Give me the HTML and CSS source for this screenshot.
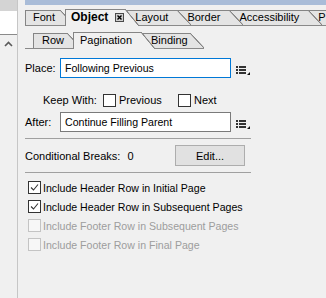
FILE: index.html
```html
<!DOCTYPE html>
<html lang="en">
<head>
    <meta charset="UTF-8">
    <title>Object - Pagination</title>
    <link rel="stylesheet" href="styles.css">
</head>
<body>
    <div class="app">
        <!-- bande de gauche -->
        <div class="side">
            <div class="side-top"></div>
            <div class="side-white"></div>
            <div class="side-scroll">
                <svg class="chevron" width="10" height="6" viewBox="0 0 10 6"><polyline points="1,5 4.5,1.5 8,5" fill="none" stroke="#5a5a5a" stroke-width="1.6"/></svg>
            </div>
        </div>

        <div class="panel">
            <div class="titlebar"></div>

            <div class="tabs tabs-main">
                <span class="tab first">Font</span>
                <span class="tab active">Object<svg class="close" width="9" height="9" viewBox="0 0 9 9"><rect x="0.5" y="0.5" width="8" height="8" fill="#cfcfcf" stroke="#4a4a4a"/><path d="M2.5 2.5 L6.5 6.5 M6.5 2.5 L2.5 6.5" stroke="#000" stroke-width="1.4"/></svg></span>
                <span class="tab">Layout</span>
                <span class="tab">Border</span>
                <span class="tab">Accessibility</span>
                <span class="tab">P</span>
            </div>

            <div class="tabs tabs-sub">
                <span class="tab first">Row</span>
                <span class="tab active">Pagination</span>
                <span class="tab last">Binding</span>
            </div>

            <div class="field-row place">
                <span class="label">Place:</span>
                <div class="input focus">Following Previous</div>
                <svg class="list-icon" width="16" height="20" viewBox="0 0 16 20">
                    <rect x="1" y="8" width="2" height="2" fill="#333"/><rect x="4" y="8" width="7" height="2" fill="#333"/>
                    <rect x="1" y="11" width="2" height="2" fill="#333"/><rect x="4" y="11" width="7" height="2" fill="#333"/>
                    <rect x="1" y="14" width="2" height="2" fill="#333"/><rect x="4" y="14" width="7" height="2" fill="#333"/>
                    <polygon points="12,17 15,17 15,14" fill="#111"/>
                </svg>
            </div>

            <div class="keep-row">
                <span class="keep-label">Keep With:</span>
                <span class="keep-item"><span class="cb"></span><span class="cb-text">Previous</span></span>
                <span class="keep-item"><span class="cb"></span><span class="cb-text">Next</span></span>
            </div>

            <div class="field-row after">
                <span class="label">After:</span>
                <div class="input">Continue Filling Parent</div>
                <svg class="list-icon" width="16" height="20" viewBox="0 0 16 20">
                    <rect x="1" y="8" width="2" height="2" fill="#333"/><rect x="4" y="8" width="7" height="2" fill="#333"/>
                    <rect x="1" y="11" width="2" height="2" fill="#333"/><rect x="4" y="11" width="7" height="2" fill="#333"/>
                    <rect x="1" y="14" width="2" height="2" fill="#333"/><rect x="4" y="14" width="7" height="2" fill="#333"/>
                    <polygon points="12,17 15,17 15,14" fill="#111"/>
                </svg>
            </div>

            <div class="sep"></div>

            <div class="cond-row">
                <span class="cond-label">Conditional Breaks:<span class="cond-value">0</span></span>
                <button class="btn">Edit...</button>
            </div>

            <div class="sep sep2"></div>

            <div class="checklist">
                <div class="check-row"><span class="cb checked"><svg width="11" height="11" viewBox="0 0 11 11"><polyline points="2,5.5 4.5,8 9,2.5" fill="none" stroke="#333" stroke-width="1.1"/></svg></span><span class="cb-text">Include Header Row in Initial Page</span></div>
                <div class="check-row"><span class="cb checked"><svg width="11" height="11" viewBox="0 0 11 11"><polyline points="2,5.5 4.5,8 9,2.5" fill="none" stroke="#333" stroke-width="1.1"/></svg></span><span class="cb-text">Include Header Row in Subsequent Pages</span></div>
                <div class="check-row disabled"><span class="cb"></span><span class="cb-text">Include Footer Row in Subsequent Pages</span></div>
                <div class="check-row disabled"><span class="cb"></span><span class="cb-text">Include Footer Row in Final Page</span></div>
            </div>
        </div>
    </div>
</body>
</html>
```

FILE: styles.css
```css
html, body {
    margin: 0;
    padding: 0;
    height: 100%;
    overflow: hidden;
}

body {
    font-family: "Liberation Sans", Arial, sans-serif;
    font-size: 11px;
    color: #000;
    background-color: #f0f0f0;
}

.app {
    display: flex;
    height: 100%;
}

/* bande de gauche */
.side {
    width: 17px;
    flex-shrink: 0;
    border-right: 1px solid #c6c6c6;
}

.side-top {
    height: 11px;
    background-color: #d4d4d4;
}

.side-white {
    height: 23px;
    background-color: #fff;
    border-bottom: 1px solid #8a8a8a;
}

.side-scroll {
    padding: 6px 0 0 4px;
}

.chevron {
    display: block;
}

/* panneau principal */
.panel {
    flex: 1;
    padding-left: 7px;
    overflow: hidden;
}

.titlebar {
    height: 5px;
    background-color: #a9bcd8;
}

/* onglets */
.tabs {
    display: flex;
    height: 16px;
    border-bottom: 1px solid #898989;
}

.tabs-main {
    margin-top: 4px;
}

.tabs-sub {
    margin-top: 6px;
    padding-left: 8px;
    width: max-content;
}

.tab {
    position: relative;
    flex-shrink: 0;
    height: 15px;
    margin-top: 1px;
    margin-left: -14px;
    padding: 0 23px 0 10px;
    line-height: 15px;
    white-space: nowrap;
    background:
        linear-gradient(to top right, #e4e4e4 calc(50% - 0.8px), #858585 calc(50% - 0.3px), #858585 calc(50% + 0.3px), transparent calc(50% + 0.8px)) right top / 14px 100% no-repeat,
        linear-gradient(#858585, #858585) left top / calc(100% - 14px) 1px no-repeat,
        linear-gradient(#e4e4e4, #e4e4e4) left top / calc(100% - 14px) 100% no-repeat;
}

.tab:nth-child(1) { z-index: 6; }
.tab:nth-child(2) { z-index: 5; }
.tab:nth-child(3) { z-index: 4; }
.tab:nth-child(4) { z-index: 3; }
.tab:nth-child(5) { z-index: 2; }
.tab:nth-child(6) { z-index: 1; }

.tab.first {
    margin-left: 0;
    padding-left: 8px;
    padding-right: 19px;
    background:
        linear-gradient(to top right, #e4e4e4 calc(50% - 0.8px), #858585 calc(50% - 0.3px), #858585 calc(50% + 0.3px), transparent calc(50% + 0.8px)) right top / 14px 100% no-repeat,
        linear-gradient(#858585, #858585) left top / 1px 100% no-repeat,
        linear-gradient(#858585, #858585) left top / calc(100% - 14px) 1px no-repeat,
        linear-gradient(#e4e4e4, #e4e4e4) left top / calc(100% - 14px) 100% no-repeat;
}

.tab.active {
    z-index: 20;
    height: 17px;
    line-height: 17px;
    margin-top: 0;
    margin-bottom: -1px;
    background:
        linear-gradient(to top right, #f0f0f0 calc(50% - 0.8px), #858585 calc(50% - 0.3px), #858585 calc(50% + 0.3px), transparent calc(50% + 0.8px)) right top / 14px 100% no-repeat,
        linear-gradient(#858585, #858585) left top / 1px 100% no-repeat,
        linear-gradient(#858585, #858585) left top / calc(100% - 14px) 1px no-repeat,
        linear-gradient(#f0f0f0, #f0f0f0) left top / calc(100% - 14px) 100% no-repeat;
}

.tabs-main .tab.active {
    margin-left: -9px;
    padding-left: 6px;
    padding-right: 15px;
    font-weight: bold;
    font-size: 12px;
}

.close {
    margin-left: 7px;
    vertical-align: -1px;
}

.tabs-sub .tab.first {
    padding-left: 9px;
    padding-right: 17px;
}

.tabs-sub .tab.active {
    margin-left: -8px;
    padding-left: 7px;
    padding-right: 23px;
}

.tabs-sub .tab.last {
    padding-right: 16px;
}

/* champs */
.field-row {
    display: flex;
    align-items: center;
    height: 20px;
}

.place {
    margin-top: 9px;
}

.after {
    margin-top: 4px;
}

.label {
    width: 35px;
}

.input {
    width: 171px;
    height: 20px;
    box-sizing: border-box;
    border: 1px solid #7a7a7a;
    background-color: #fff;
    padding-left: 4px;
    line-height: 18px;
    font-size: 10.6px;
}

.input.focus {
    border-color: #0078d7;
}

.list-icon {
    margin-left: 4px;
}

.keep-row {
    display: flex;
    align-items: center;
    height: 16px;
    margin-top: 14px;
    padding-left: 18px;
}

.keep-label {
    width: 60px;
}

.keep-item {
    display: flex;
    align-items: center;
    width: 75px;
}

/* cases a cocher */
.cb {
    width: 13px;
    height: 13px;
    box-sizing: border-box;
    border: 1px solid #333;
    background-color: #fff;
    flex-shrink: 0;
    display: flex;
    align-items: center;
    justify-content: center;
}

.cb-text {
    margin-left: 2px;
}

.keep-item .cb-text {
    margin-left: 3px;
}

.sep {
    width: 226px;
    height: 1px;
    margin-top: 6px;
    background-color: #a0a0a0;
}

.cond-row {
    display: flex;
    align-items: center;
    height: 21px;
    margin-top: 6px;
}

.cond-label {
    width: 150px;
}

.cond-value {
    margin-left: 7px;
}

.btn {
    width: 70px;
    height: 21px;
    border: 1px solid #adadad;
    background-color: #e1e1e1;
    font-family: "Liberation Sans", Arial, sans-serif;
    font-size: 11px;
    color: #000;
    padding: 0;
}

.checklist {
    margin-top: 5px;
    font-size: 10.6px;
}

.check-row {
    display: flex;
    align-items: center;
    height: 19px;
    padding-left: 3px;
}

.check-row.disabled {
    color: #9d9d9d;
}

.check-row.disabled .cb {
    border-color: #c4c4c4;
    background-color: #f7f7f7;
}
```
